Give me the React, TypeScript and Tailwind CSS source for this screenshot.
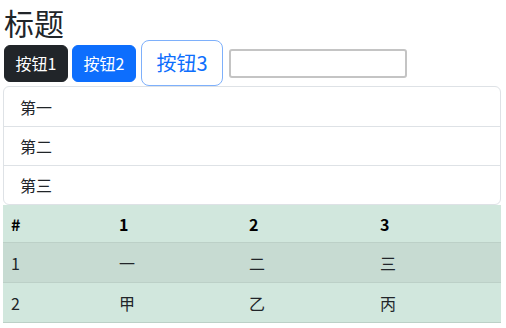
const rows = [
  ["1", "一", "二", "三"],
  ["2", "甲", "乙", "丙"],
];

const App = () => {
  return (
    <div
      className="pl-[3px] pr-[5px] text-[#212529] bg-white"
      style={{ fontFamily: '"Noto Sans CJK SC", "Noto Sans", sans-serif' }}
    >
      <h1 className="pl-px text-[30px] leading-[44px] font-normal">标题</h1>

      <div className="flex items-center gap-[4px] h-[46px] -mt-[4px] pl-px">
        <button className="w-[64px] h-[37px] rounded-md border border-[#212529] bg-[#212529] text-white text-[16px] leading-6">
          按钮1
        </button>
        <button className="w-[64px] h-[37px] rounded-md border border-[#0d6efd] bg-[#0d6efd] text-white text-[16px] leading-6">
          按钮2
        </button>
        <button className="ml-px w-[82px] h-[46px] rounded-lg border border-[#7eb0fb] bg-white text-[#0d6efd] text-[20px] leading-[30px]">
          按钮3
        </button>
        <input
          type="text"
          className="ml-[2px] w-[178px] h-[29px] border-2 border-[#c4c4c4] rounded-[3px] px-1 text-[13px] outline-none"
        />
      </div>

      <ul className="border border-[#dee2e6] rounded-md">
        {["第一", "第二", "第三"].map((t, i) => (
          <li
            key={t}
            className={`h-[39px] flex items-center px-4 text-[16px] ${i > 0 ? "border-t border-[#dee2e6]" : ""}`}
          >
            {t}
          </li>
        ))}
      </ul>

      <div className="text-[16px] bg-[#d1e7dd]">
        <div className="grid grid-cols-[108px_130px_131px_1fr] h-[38px] items-center font-bold text-black border-b border-[#bcd0c7]">
          <div className="px-2">#</div>
          <div className="px-2">1</div>
          <div className="px-2">2</div>
          <div className="px-2">3</div>
        </div>
        {rows.map((r, i) => (
          <div
            key={r[0]}
            className={`grid grid-cols-[108px_130px_131px_1fr] h-[40px] items-center border-b border-[#bcd0c7] ${i === 0 ? "bg-[#c7dbd2]" : ""}`}
          >
            {r.map((c, j) => (
              <div key={j} className="px-2">
                {c}
              </div>
            ))}
          </div>
        ))}
      </div>
    </div>
  );
};

export default App;
